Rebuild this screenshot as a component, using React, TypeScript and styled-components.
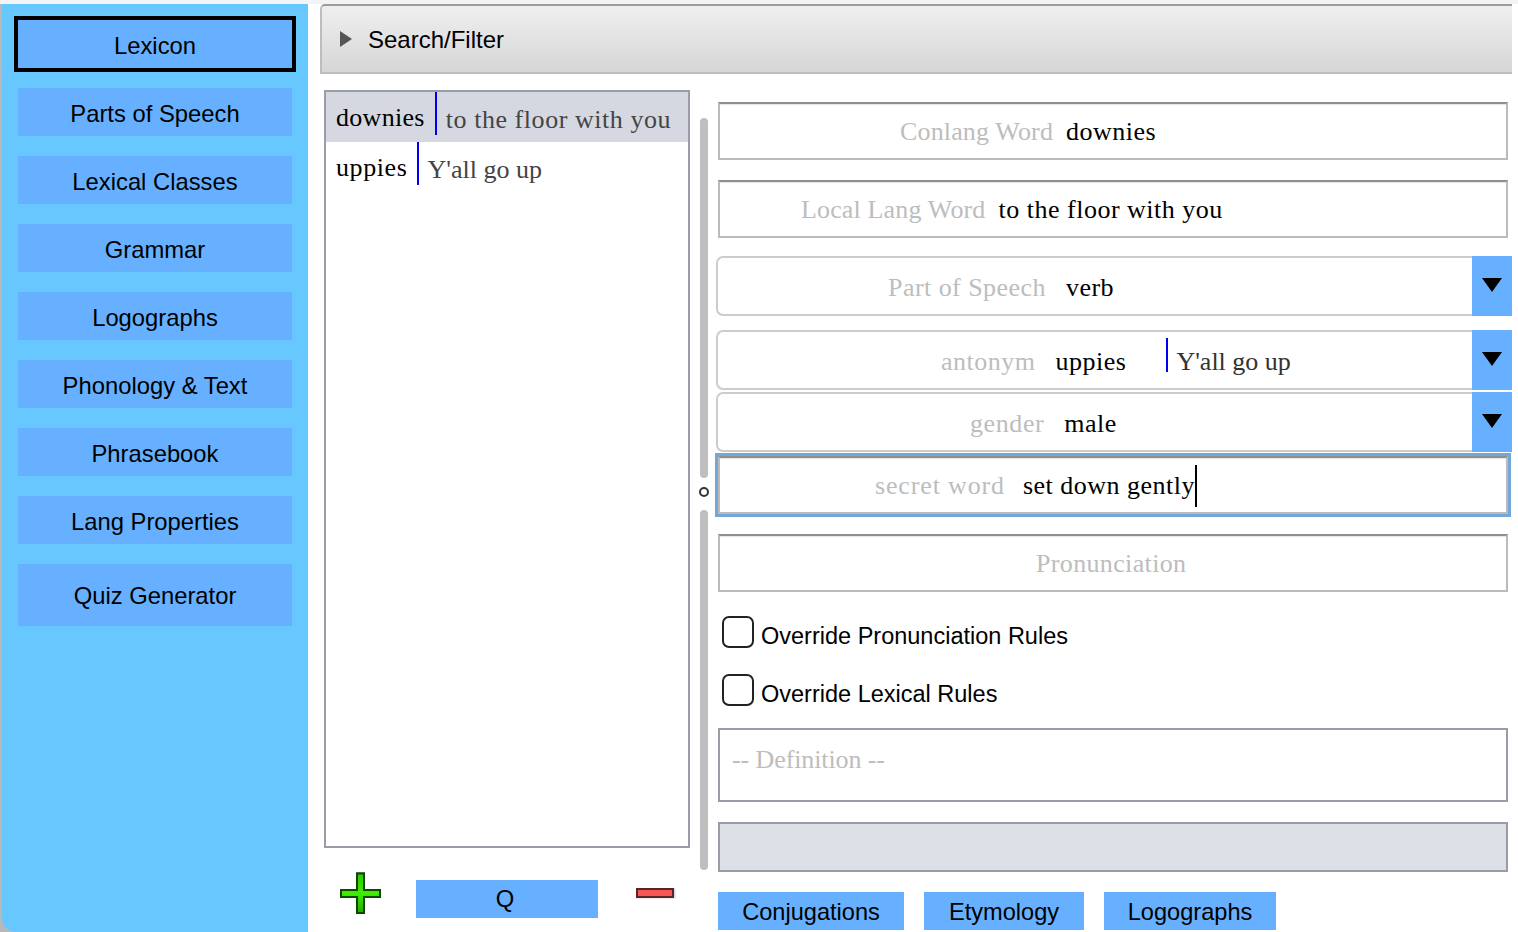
import React from 'react';
import styled, { createGlobalStyle } from 'styled-components';

const navItems = ['Parts of Speech', 'Lexical Classes', 'Grammar', 'Logographs', 'Phonology & Text', 'Phrasebook', 'Lang Properties'];

const App: React.FC = () => {
  return (
    <Page>
      <GlobalStyle />
      <SidebarShell>
        <Sidebar>
          <NavButton $active>Lexicon</NavButton>
          {navItems.map((item) => (
            <NavButton key={item}>{item}</NavButton>
          ))}
          <NavButton $tall>Quiz Generator</NavButton>
        </Sidebar>
      </SidebarShell>

      <Main>
        <SearchBar>
          <Disclosure />
          <SearchTitle>Search/Filter</SearchTitle>
        </SearchBar>

        <Body>
          {/* Word list */}
          <ListColumn>
            <WordList>
              <WordRow $selected>
                <Conlang $tracking={0.3}>downies</Conlang>
                <Local $tracking={0.55} $gap={9}>to the floor with you</Local>
              </WordRow>
              <WordRow>
                <Conlang $tracking={0.6}>uppies</Conlang>
                <Local $tracking={0} $gap={8}>Y'all go up</Local>
              </WordRow>
            </WordList>
            <ListActions>
              <svg width="44" height="44" viewBox="0 0 44 44" aria-label="add">
                <defs>
                  <linearGradient id="plusFill" x1="0" y1="0" x2="0" y2="1">
                    <stop offset="0" stopColor="#2fc400" />
                    <stop offset="0.5" stopColor="#3cf000" />
                    <stop offset="1" stopColor="#26a800" />
                  </linearGradient>
                </defs>
                <path d="M17 1h9v17h16v9H26v16h-9V27H1v-9h16z" fill="#8a8a8a" />
                <path d="M18 2.500h7v16.500h16v7H25v16h-7V26H2v-7h16z" fill="url(#plusFill)" stroke="#0d4a00" strokeWidth="2" />
              </svg>
              <QueryButton>Q</QueryButton>
              <MinusIcon width="40" height="11" viewBox="0 0 40 11" aria-label="remove">
                <rect x="0.5" y="0.5" width="39" height="10" fill="#d9d9d9" />
                <rect x="1" y="1" width="36" height="8" fill="#f85555" stroke="#5a2528" strokeWidth="2" />
              </MinusIcon>
            </ListActions>
          </ListColumn>

          <Splitter>
            <SplitTrack />
            <SplitKnob />
            <SplitTrack />
          </Splitter>

          {/* Word details */}
          <Details>
            <Field $top={0} $offset={180}>
              <Label>Conlang Word</Label>
              <Value>downies</Value>
            </Field>
            <Field $top={20} $offset={81}>
              <Label>Local Lang Word</Label>
              <Value>to the floor with you</Value>
            </Field>
            <Combo $top={18}>
              <ComboBody $offset={170}>
                <Label $tracking={0.45}>Part of Speech</Label>
                <ComboValue>verb</ComboValue>
              </ComboBody>
              <ComboArrow><ArrowShape /></ComboArrow>
            </Combo>
            <Combo $top={14}>
              <ComboBody $offset={223}>
                <Label $tracking={0.5}>antonym</Label>
                <ComboValue>uppies</ComboValue>
                <AntonymGloss>Y'all go up</AntonymGloss>
              </ComboBody>
              <ComboArrow><ArrowShape /></ComboArrow>
            </Combo>
            <Combo $top={2}>
              <ComboBody $offset={252}>
                <Label $tracking={0.6}>gender</Label>
                <ComboValue>male</ComboValue>
              </ComboBody>
              <ComboArrow><ArrowShape /></ComboArrow>
            </Combo>
            <Field $top={4} $offset={155} $focused>
              <Label $tracking={0.85}>secret word</Label>
              <FocusValue>set down gently</FocusValue>
              <Caret />
            </Field>
            <Field $top={20} $offset={316}>
              <Label $tracking={0.35}>Pronunciation</Label>
            </Field>
            <CheckRow $top={24}>
              <CheckBox type="checkbox" />
              <CheckText>Override Pronunciation Rules</CheckText>
            </CheckRow>
            <CheckRow $top={26}>
              <CheckBox type="checkbox" />
              <CheckText>Override Lexical Rules</CheckText>
            </CheckRow>
            <Definition>-- Definition --</Definition>
            <GrayBox />
            <TabRow>
              <TabButton $width={186}>Conjugations</TabButton>
              <TabButton $width={160}>Etymology</TabButton>
              <TabButton $width={172}>Logographs</TabButton>
            </TabRow>
          </Details>
        </Body>
      </Main>
    </Page>
  );
};

// Styled Components
const GlobalStyle = createGlobalStyle`
  html, body {
    margin: 0;
    height: 932px;
    overflow: hidden;
    background: #fff;
  }
`;

const Page = styled.div`
  display: flex;
  width: 1518px;
  height: 932px;
  box-sizing: border-box;
  border-top: 4px solid #f3f4f6;
  font-family: "Liberation Sans", Arial, sans-serif;
  font-size: 23.8px;
  color: #000;
`;

const SidebarShell = styled.div`
  width: 308px;
  flex: none;
  padding-left: 2px;
  box-sizing: border-box;
  background: #b8b8b8;
`;

const Sidebar = styled.nav`
  height: 100%;
  box-sizing: border-box;
  padding: 16px 16px 0;
  display: flex;
  flex-direction: column;
  gap: 20px;
  background: #66c8ff;
  border-bottom-left-radius: 14px;
`;

const NavButton = styled.div<{ $active?: boolean; $tall?: boolean }>`
  height: ${(p) => (p.$tall ? 62 : 48)}px;
  box-sizing: border-box;
  padding-top: ${(p) => (p.$tall ? 2 : 4)}px;
  display: flex;
  align-items: center;
  justify-content: center;
  flex: none;
  background: #66b0ff;
  outline: ${(p) => (p.$active ? '4px solid #000' : 'none')};
`;

const Main = styled.main`
  flex: 1;
  min-width: 0;
  padding: 0 6px 0 12px;
`;

const SearchBar = styled.div`
  height: 70px;
  box-sizing: border-box;
  display: flex;
  align-items: center;
  padding: 0 0 0 18px;
  gap: 16px;
  background: linear-gradient(#efefef, #d6d6d6);
  border-top: 2px solid #9c9c9c;
  border-left: 2px solid #bdbdbd;
  border-bottom: 2px solid #bdbdbd;
  border-top-left-radius: 5px;
`;

const SearchTitle = styled.span`
  margin-top: 2px;
  font-size: 24px;
`;

const Disclosure = styled.span`
  width: 0;
  height: 0;
  border-left: 12px solid #555;
  border-top: 8px solid transparent;
  border-bottom: 8px solid transparent;
`;

const Body = styled.div`
  display: flex;
  padding-left: 4px;
`;

const ListColumn = styled.div`
  width: 366px;
  flex: none;
  padding-top: 16px;
`;

const WordList = styled.div`
  height: 758px;
  box-sizing: border-box;
  border: 2px solid #9a9ca8;
`;

const WordRow = styled.div<{ $selected?: boolean }>`
  height: 50px;
  display: flex;
  align-items: flex-start;
  padding-left: 10px;
  background: ${(p) => (p.$selected ? '#d5d8e0' : '#fff')};
  font-family: "Liberation Serif", "Times New Roman", serif;
  font-size: 26px;
`;

const Conlang = styled.span<{ $tracking: number }>`
  height: 43px;
  line-height: 51px;
  padding-right: 10px;
  border-right: 2px solid #0000f0;
  letter-spacing: ${(p) => p.$tracking}px;
  color: #000;
`;

const Local = styled.span<{ $tracking: number; $gap: number }>`
  line-height: 56px;
  padding-left: ${(p) => p.$gap}px;
  letter-spacing: ${(p) => p.$tracking}px;
  color: #444;
`;

const ListActions = styled.div`
  display: flex;
  align-items: flex-start;
  padding: 23px 0 0 15px;
`;

const QueryButton = styled.div`
  width: 182px;
  height: 38px;
  box-sizing: border-box;
  padding-right: 4px;
  margin: 9px 38px 0 33px;
  display: flex;
  align-items: center;
  justify-content: center;
  background: #66b0ff;
`;

const MinusIcon = styled.svg`
  margin-top: 17px;
`;

const Splitter = styled.div`
  width: 8px;
  flex: none;
  margin: 44px 10px 0;
  display: flex;
  flex-direction: column;
  align-items: center;
`;

const SplitTrack = styled.div`
  width: 8px;
  height: 360px;
  border-radius: 4px;
  background: #bfbfbf;
`;

const SplitKnob = styled.div`
  width: 10px;
  height: 10px;
  box-sizing: border-box;
  margin: 9px 0 13px;
  border: 2px solid #333;
  border-radius: 50%;
`;

const Details = styled.div`
  flex: 1;
  min-width: 0;
  padding-top: 28px;
  font-family: "Liberation Serif", "Times New Roman", serif;
  font-size: 26px;
`;

const Field = styled.div<{ $top: number; $offset: number; $focused?: boolean }>`
  height: 58px;
  width: 790px;
  box-sizing: border-box;
  margin-top: ${(p) => p.$top}px;
  padding: 2px 0 0 ${(p) => p.$offset}px;
  display: flex;
  align-items: center;
  border: 2px solid #bbb;
  border-top-color: #8f8f8f;
  box-shadow: ${(p) => (p.$focused ? '0 0 0 3px #74a6da, ' : '')}inset 0 1px 1px #e4e4e4;
`;

const Label = styled.span<{ $tracking?: number }>`
  letter-spacing: ${(p) => p.$tracking ?? 0.15}px;
  color: #bdbdbd;
`;

const Value = styled.span`
  margin-left: 13px;
  letter-spacing: 0.5px;
  color: #000;
`;

const FocusValue = styled(Value)`
  margin-left: 18px;
`;

const Caret = styled.span`
  width: 2px;
  height: 42px;
  background: #000;
`;

const Combo = styled.div<{ $top: number }>`
  height: 60px;
  margin-top: ${(p) => p.$top}px;
  margin-left: -2px;
  display: flex;
`;

const ComboBody = styled.div<{ $offset: number }>`
  width: 756px;
  box-sizing: border-box;
  padding: 4px 0 0 ${(p) => p.$offset}px;
  display: flex;
  align-items: center;
  border: 2px solid #ccc;
  border-right: none;
  border-radius: 7px 0 0 7px;
`;

const ComboValue = styled.span`
  margin-left: 20px;
  letter-spacing: 0.5px;
`;

const AntonymGloss = styled.span`
  margin-left: 40px;
  padding-left: 10px;
  height: 34px;
  line-height: 34px;
  position: relative;
  color: #333;
  &::before {
    content: '';
    position: absolute;
    left: 0;
    top: -7px;
    width: 2px;
    height: 34px;
    background: #0000f0;
  }
`;

const ComboArrow = styled.div`
  width: 40px;
  flex: none;
  display: flex;
  justify-content: center;
  padding-top: 22px;
  box-sizing: border-box;
  background: #66b0ff;
`;

const ArrowShape = styled.span`
  width: 0;
  height: 0;
  border-top: 14px solid #000;
  border-left: 10px solid transparent;
  border-right: 10px solid transparent;
`;

const CheckRow = styled.label<{ $top: number }>`
  height: 32px;
  margin-top: ${(p) => p.$top}px;
  margin-left: 4px;
  display: flex;
  align-items: center;
  gap: 7px;
  font-family: "Liberation Sans", Arial, sans-serif;
  font-size: 23.5px;
`;

const CheckText = styled.span`
  margin-top: 8px;
`;

const CheckBox = styled.input`
  appearance: none;
  width: 32px;
  height: 32px;
  margin: 0;
  box-sizing: border-box;
  border: 2px solid #222;
  border-radius: 7px;
  background: #fff;
`;

const Definition = styled.div`
  width: 790px;
  height: 74px;
  box-sizing: border-box;
  margin-top: 22px;
  padding: 15px 12px;
  border: 2px solid #9a9ca8;
  letter-spacing: -0.1px;
  color: #bdbdbd;
`;

const GrayBox = styled.div`
  width: 790px;
  height: 50px;
  box-sizing: border-box;
  margin-top: 20px;
  border: 2px solid #9a9ca8;
  background: #dde0e6;
`;

const TabRow = styled.div`
  display: flex;
  gap: 20px;
  margin-top: 20px;
  font-family: "Liberation Sans", Arial, sans-serif;
  font-size: 23.6px;
`;

const TabButton = styled.div<{ $width: number }>`
  width: ${(p) => p.$width}px;
  height: 38px;
  box-sizing: border-box;
  padding-top: 3px;
  display: flex;
  align-items: center;
  justify-content: center;
  background: #66b0ff;
`;

export default App;
